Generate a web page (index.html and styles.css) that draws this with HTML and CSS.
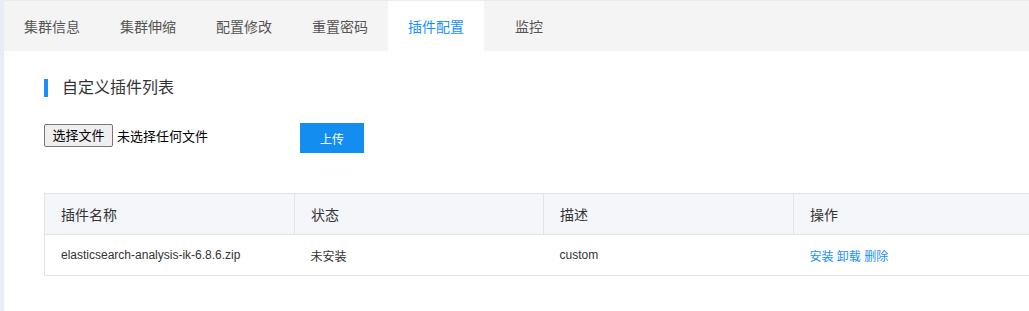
FILE: index.html
```html
<!DOCTYPE html>
<html lang="zh">
<head>
<meta charset="utf-8">
<link rel="stylesheet" href="styles.css">
</head>
<body>
<div class="frame">
  <nav class="tabs">
    <div class="tab">集群信息</div>
    <div class="tab">集群伸缩</div>
    <div class="tab">配置修改</div>
    <div class="tab">重置密码</div>
    <div class="tab active">插件配置</div>
    <div class="tab last">监控</div>
  </nav>
  <main class="content">
    <h2 class="section-title">自定义插件列表</h2>
    <div class="upload-row">
      <div class="file-input">
        <span class="file-btn">选择文件</span>
        <span class="file-name">未选择任何文件</span>
      </div>
      <button class="upload-btn">上传</button>
    </div>
    <table class="plugin-table">
      <colgroup>
        <col class="c1"><col class="c2"><col class="c3"><col class="c4">
      </colgroup>
      <thead>
        <tr><th>插件名称</th><th>状态</th><th>描述</th><th>操作</th></tr>
      </thead>
      <tbody>
        <tr>
          <td>elasticsearch-analysis-ik-6.8.6.zip</td>
          <td>未安装</td>
          <td>custom</td>
          <td class="ops"><a>安装</a> <a>卸载</a> <a>删除</a></td>
        </tr>
      </tbody>
    </table>
  </main>
</div>
</body>
</html>
```
FILE: styles.css
```css
* { box-sizing: border-box; }
html, body {
  margin: 0;
  padding: 0;
  background: #fff;
  overflow: hidden;
  height: 311px;
}
body {
  font-family: "Liberation Sans", "Noto Sans CJK SC", sans-serif;
  color: #333;
}
.frame {
  border-left: 4px solid #e9ecf2;
  border-top: 1px solid #e9ecf2;
  height: 311px;
}
.tabs {
  display: flex;
  background: #f4f4f4;
  height: 50px;
}
.tab {
  width: 96px;
  text-align: center;
  font-size: 14px;
  line-height: 52px;
  color: #555;
}
.tab.last {
  padding-right: 6px;
}
.tab.active {
  background: #fff;
  color: #1890ff;
}
.content {
  padding-left: 40px;
}
.section-title {
  margin: 28px 0 0;
  height: 18px;
  border-left: 4px solid #1890ff;
  padding-left: 14px;
  font-size: 16px;
  font-weight: normal;
  line-height: 18px;
  color: #333;
}
.upload-row {
  display: flex;
  align-items: flex-start;
  margin-top: 26px;
}
.file-input {
  display: flex;
  align-items: center;
  width: 256px;
  margin-top: 1px;
}
.file-btn {
  display: inline-block;
  height: 23px;
  width: 69px;
  background: #efefef;
  border: 1px solid #767676;
  border-radius: 2px;
  font-size: 13px;
  line-height: 21px;
  text-align: center;
  color: #000;
}
.file-name {
  margin-left: 4px;
  font-size: 13px;
  color: #000;
}
.upload-btn {
  width: 64px;
  height: 30px;
  border: none;
  border-radius: 0;
  background: #138ef0;
  color: #fff;
  font-family: inherit;
  font-size: 12px;
  padding: 0;
}
.plugin-table {
  margin-top: 40px;
  width: 999px;
  border-collapse: collapse;
  table-layout: fixed;
}
.plugin-table col.c1 { width: 250px; }
.plugin-table col.c2 { width: 249px; }
.plugin-table col.c3 { width: 250px; }
.plugin-table col.c4 { width: 250px; }
.plugin-table th,
.plugin-table td {
  text-align: left;
  padding: 0 0 0 16px;
  border: 1px solid #e3e3e3;
  color: #333;
}
.plugin-table th {
  background: #f5f6fa;
  font-weight: normal;
  font-size: 14px;
  height: 41px;
}
.plugin-table td {
  font-size: 12px;
  height: 41px;
  border-left: none;
  border-right: none;
}
.plugin-table td:first-child {
  border-left: 1px solid #e3e3e3;
}
.ops a {
  color: #1890ff;
  cursor: pointer;
}
```
